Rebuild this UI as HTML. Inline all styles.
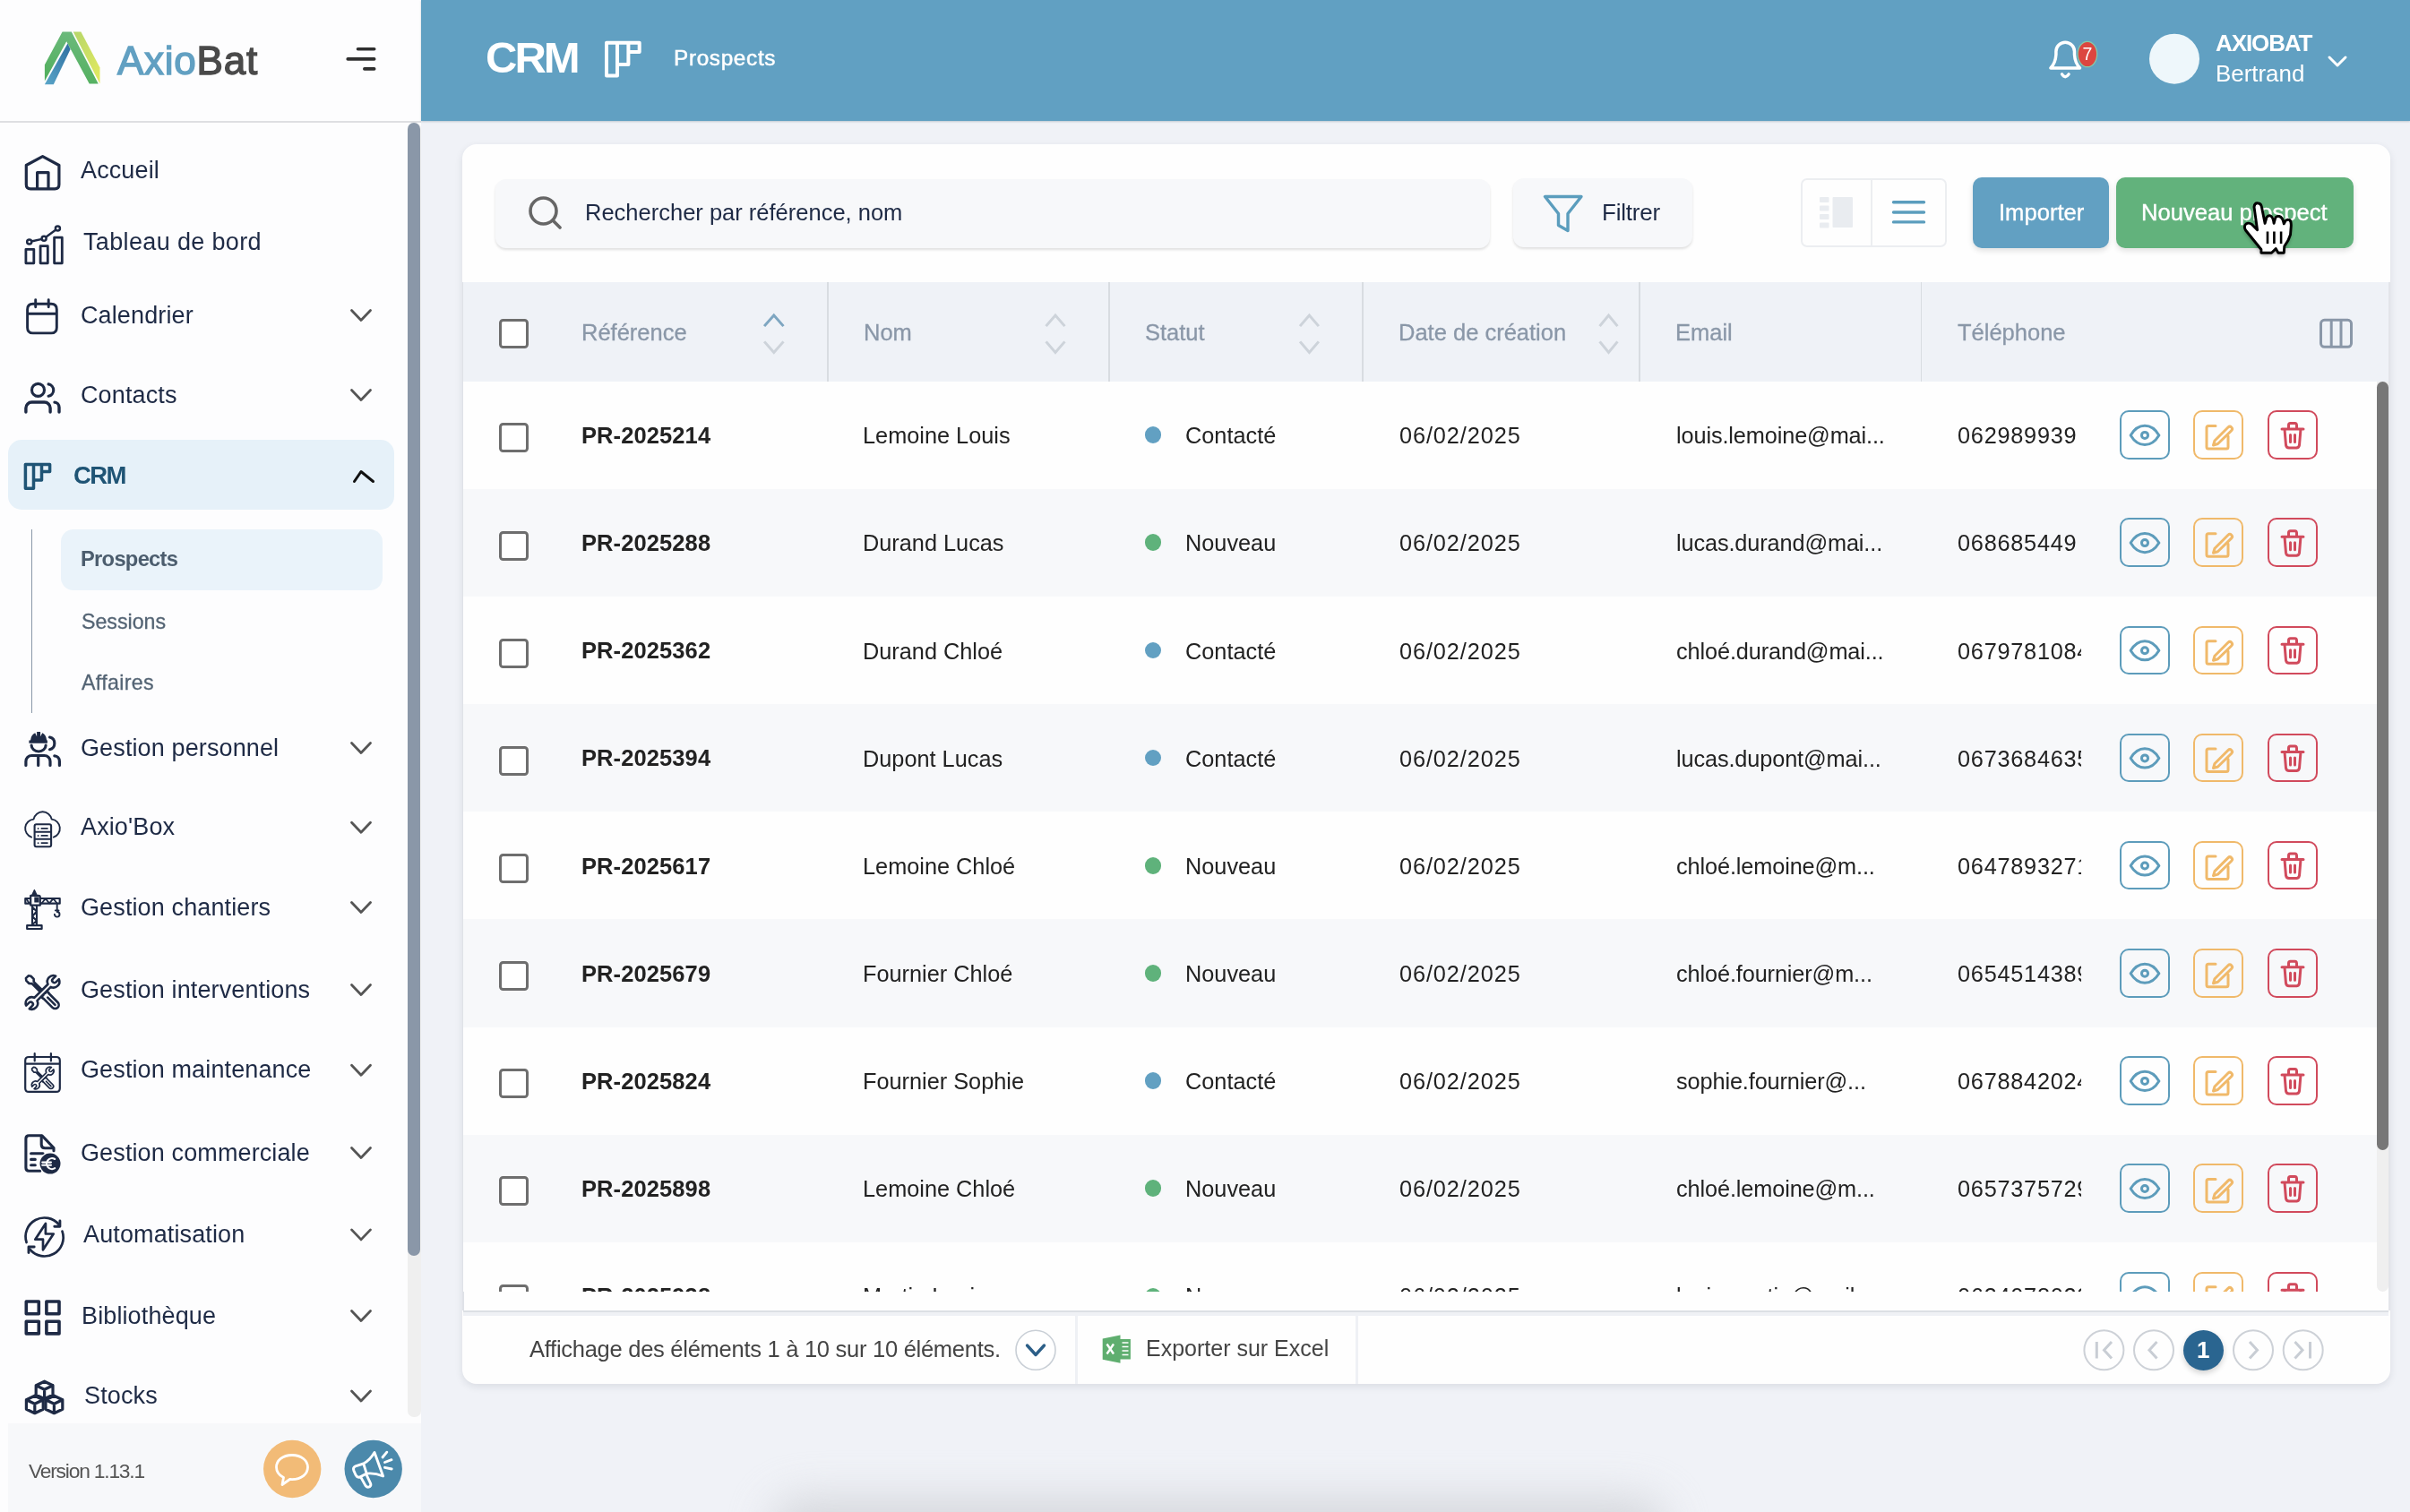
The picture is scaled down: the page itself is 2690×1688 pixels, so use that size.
<!DOCTYPE html>
<html><head><meta charset="utf-8"><title>AxioBat CRM - Prospects</title>
<style>
html,body{margin:0;padding:0;width:2690px;height:1688px;overflow:hidden;background:#f0f2f7}
body{position:relative;font-family:'Liberation Sans',sans-serif;}
.t{position:absolute;white-space:nowrap;font-family:'Liberation Sans',sans-serif;will-change:transform}
.r{position:absolute}
svg{overflow:visible}
</style></head><body>
<div class="r" style="left:0.0px;top:0.0px;width:2690.0px;height:1688.0px;background:#f0f2f7;"></div><div class="r" style="left:860px;top:1672px;width:1000px;height:70px;background:#cfd1d6;border-radius:35px;filter:blur(24px);opacity:0.8"></div><div class="r" style="left:0.0px;top:0.0px;width:470.0px;height:1688.0px;background:#fdfdfe;"></div><div class="r" style="left:0.0px;top:135.0px;width:470.0px;height:2.0px;background:#dedfe2;"></div><div class="r" style="left:470.0px;top:0.0px;width:2220.0px;height:135.0px;background:#61a0c2;box-shadow:0 1px 2px rgba(40,70,90,0.25);"></div><div class="t" style="left:541.5px;top:40.2px;font-size:49px;line-height:49px;color:#ffffff;font-weight:bold;letter-spacing:-3px;">CRM</div><div class="t" style="left:752.4px;top:53.1px;font-size:24.3px;line-height:24.3px;color:#ffffff;font-weight:normal;-webkit-text-stroke:0.5px #fff;letter-spacing:0.68px;">Prospects</div><div class="t" style="left:2473.0px;top:35.0px;font-size:26px;line-height:26px;color:#ffffff;font-weight:bold;letter-spacing:-1.1px;">AXIOBAT</div><div class="t" style="left:2473.0px;top:70.3px;font-size:25.9px;line-height:25.9px;color:#ffffff;font-weight:normal;">Bertrand</div><div class="t" style="left:131.2px;top:45.8px;font-size:44px;line-height:44px;color:#4a4a4a;font-weight:normal;letter-spacing:0.75px;"><span style="color:#62a0c2;-webkit-text-stroke:1.4px #62a0c2">Axio</span><span style="color:#4a4a4a;-webkit-text-stroke:1.4px #4a4a4a">Bat</span></div><div class="r" style="left:455.0px;top:137.0px;width:15.0px;height:1445.0px;background:#efefef;border-radius:7px;"></div><div class="r" style="left:455.0px;top:137.0px;width:14.0px;height:1265.0px;background:#8a97a8;border-radius:7px;"></div><div class="t" style="left:90.2px;top:177.0px;font-size:27px;line-height:27px;color:#1e2a45;font-weight:normal;letter-spacing:0.12px;">Accueil</div><div class="t" style="left:93.4px;top:257.0px;font-size:27px;line-height:27px;color:#1e2a45;font-weight:normal;letter-spacing:0.35px;">Tableau de bord</div><div class="t" style="left:90.2px;top:338.5px;font-size:27px;line-height:27px;color:#1e2a45;font-weight:normal;letter-spacing:0.12px;">Calendrier</div><div class="t" style="left:90.2px;top:427.5px;font-size:27px;line-height:27px;color:#1e2a45;font-weight:normal;letter-spacing:0.12px;">Contacts</div><div class="t" style="left:90.2px;top:821.5px;font-size:27px;line-height:27px;color:#1e2a45;font-weight:normal;letter-spacing:0.12px;">Gestion personnel</div><div class="t" style="left:90.2px;top:910.3px;font-size:27px;line-height:27px;color:#1e2a45;font-weight:normal;letter-spacing:0.12px;">Axio'Box</div><div class="t" style="left:90.2px;top:999.5px;font-size:27px;line-height:27px;color:#1e2a45;font-weight:normal;letter-spacing:0.12px;">Gestion chantiers</div><div class="t" style="left:90.2px;top:1091.5px;font-size:27px;line-height:27px;color:#1e2a45;font-weight:normal;letter-spacing:0.12px;">Gestion interventions</div><div class="t" style="left:90.2px;top:1181.2px;font-size:27px;line-height:27px;color:#1e2a45;font-weight:normal;letter-spacing:0.12px;">Gestion maintenance</div><div class="t" style="left:90.2px;top:1273.5px;font-size:27px;line-height:27px;color:#1e2a45;font-weight:normal;letter-spacing:0.12px;">Gestion commerciale</div><div class="t" style="left:93.4px;top:1364.9px;font-size:27px;line-height:27px;color:#1e2a45;font-weight:normal;letter-spacing:0.12px;">Automatisation</div><div class="t" style="left:90.5px;top:1455.5px;font-size:27px;line-height:27px;color:#1e2a45;font-weight:normal;letter-spacing:0.12px;">Bibliothèque</div><div class="t" style="left:93.8px;top:1545.0px;font-size:27px;line-height:27px;color:#1e2a45;font-weight:normal;letter-spacing:0.12px;">Stocks</div><div class="r" style="left:9.0px;top:491.0px;width:431.0px;height:78.0px;background:#e6f1f9;border-radius:15px;"></div><div class="t" style="left:82.0px;top:516.5px;font-size:27.5px;line-height:27.5px;color:#1f5475;font-weight:bold;letter-spacing:-1.6px;">CRM</div><div class="r" style="left:34.7px;top:591.0px;width:1.6px;height:205.0px;background:#8a98a8;"></div><div class="r" style="left:68.0px;top:591.0px;width:359.0px;height:68.4px;background:#eaf3fa;border-radius:14px;"></div><div class="t" style="left:89.6px;top:613.4px;font-size:23.7px;line-height:23.7px;color:#4c5d6e;font-weight:bold;letter-spacing:-0.7px;">Prospects</div><div class="t" style="left:90.6px;top:682.6px;font-size:23.2px;line-height:23.2px;color:#546474;font-weight:normal;-webkit-text-stroke:0.3px #546474;">Sessions</div><div class="t" style="left:90.9px;top:750.9px;font-size:23.2px;line-height:23.2px;color:#546474;font-weight:normal;-webkit-text-stroke:0.3px #546474;letter-spacing:0.35px;">Affaires</div><div class="r" style="left:9.0px;top:1589.0px;width:461.0px;height:99.0px;background:#f7f8fa;"></div><div class="t" style="left:32.2px;top:1631.4px;font-size:22.8px;line-height:22.8px;color:#555555;font-weight:normal;letter-spacing:-1.2px;">Version 1.13.1</div><div class="r" style="left:516px;top:161px;width:2152px;height:1384px;background:#fefefe;border-radius:16px;box-shadow:0 3px 8px rgba(30,40,60,0.10)"></div><div class="r" style="left:553px;top:200px;width:1110px;height:76.5px;background:#f7f8fa;border-radius:12px;box-shadow:0 2px 3px rgba(0,0,0,0.12)"></div><div class="t" style="left:653.0px;top:225.2px;font-size:25.5px;line-height:25.5px;color:#1e2a45;font-weight:normal;">Rechercher par référence, nom</div><div class="r" style="left:1689px;top:199px;width:200px;height:77.4px;background:#f7f8fa;border-radius:12px;box-shadow:0 2px 3px rgba(0,0,0,0.12)"></div><div class="t" style="left:1788.2px;top:224.4px;font-size:26px;line-height:26px;color:#1e2a45;font-weight:normal;letter-spacing:-0.2px;">Filtrer</div><div class="r" style="left:2009.5px;top:198.6px;width:163px;height:77px;border:2px solid #eceef1;border-radius:7px;box-sizing:border-box"></div><div class="r" style="left:2087.8px;top:199.0px;width:1.8px;height:76.0px;background:#eceef1;"></div><div class="r" style="left:2202.4px;top:198.3px;width:151.6px;height:79.2px;background:#62a0c2;border-radius:10px;box-shadow:0 3px 6px rgba(0,0,0,0.12)"></div><div class="t" style="left:2230.5px;top:224.8px;font-size:25.6px;line-height:25.6px;color:#ffffff;font-weight:normal;-webkit-text-stroke:0.35px #fff;">Importer</div><div class="r" style="left:2361.8px;top:198.3px;width:264.9px;height:79.2px;background:#62b27c;border-radius:10px;box-shadow:0 3px 6px rgba(0,0,0,0.12)"></div><div class="t" style="left:2390.0px;top:224.8px;font-size:25.6px;line-height:25.6px;color:#ffffff;font-weight:normal;-webkit-text-stroke:0.35px #fff;">Nouveau prospect</div><div class="r" style="left:515.5px;top:314.6px;width:2.0px;height:1148.3px;background:#dfe2e7;"></div><div class="r" style="left:2666.0px;top:314.6px;width:2.0px;height:1148.3px;background:#e3e5ea;"></div><div class="r" style="left:517.0px;top:314.6px;width:2149.0px;height:111.0px;background:#eff2f7;"></div><div class="r" style="left:557.4px;top:356.3px;width:33px;height:33px;border:3.1px solid #6e6e6e;border-radius:4.5px;box-sizing:border-box;background:#fff"></div><div class="t" style="left:649.3px;top:358.6px;font-size:25.5px;line-height:25.5px;color:#8a97a8;font-weight:normal;-webkit-text-stroke:0.3px #8a97a8;">Référence</div><div class="t" style="left:963.9px;top:358.6px;font-size:25.5px;line-height:25.5px;color:#8a97a8;font-weight:normal;-webkit-text-stroke:0.3px #8a97a8;">Nom</div><div class="t" style="left:1278.3px;top:358.6px;font-size:25.5px;line-height:25.5px;color:#8a97a8;font-weight:normal;-webkit-text-stroke:0.3px #8a97a8;">Statut</div><div class="t" style="left:1560.7px;top:358.6px;font-size:25.5px;line-height:25.5px;color:#8a97a8;font-weight:normal;-webkit-text-stroke:0.3px #8a97a8;">Date de création</div><div class="t" style="left:1870.4px;top:358.6px;font-size:25.5px;line-height:25.5px;color:#8a97a8;font-weight:normal;-webkit-text-stroke:0.3px #8a97a8;">Email</div><div class="t" style="left:2185.4px;top:358.6px;font-size:25.5px;line-height:25.5px;color:#8a97a8;font-weight:normal;-webkit-text-stroke:0.3px #8a97a8;">Téléphone</div><div class="r" style="left:923.0px;top:314.6px;width:1.6px;height:111.0px;background:#d8dce1;"></div><div class="r" style="left:1237.4px;top:314.6px;width:1.6px;height:111.0px;background:#d8dce1;"></div><div class="r" style="left:1520.4px;top:314.6px;width:1.6px;height:111.0px;background:#d8dce1;"></div><div class="r" style="left:1829.1px;top:314.6px;width:1.6px;height:111.0px;background:#d8dce1;"></div><div class="r" style="left:2143.6px;top:314.6px;width:1.6px;height:111.0px;background:#d8dce1;"></div><div class="r" style="left:517px;top:425.6px;width:2136px;height:1016.8px;overflow:hidden"><div class="r" style="left:0px;top:0.0px;width:2136px;height:120.2px;background:#fefefe"></div><div class="r" style="left:40px;top:46.8px;width:33px;height:33px;border:3.1px solid #6e6e6e;border-radius:4.5px;box-sizing:border-box;background:#fff"></div><div class="t" style="left:131.8px;top:48.5px;font-size:25.5px;line-height:25.5px;color:#222;font-weight:bold;letter-spacing:0.1px;">PR-2025214</div><div class="t" style="left:446.0px;top:48.6px;font-size:25.3px;line-height:25.3px;color:#222;font-weight:normal;">Lemoine Louis</div><div class="r" style="left:760.7px;top:50.8px;width:18.7px;height:18.7px;border-radius:50%;background:#62a0c2"></div><div class="t" style="left:806.4px;top:48.6px;font-size:25.3px;line-height:25.3px;color:#222;font-weight:normal;">Contacté</div><div class="t" style="left:1044.6px;top:48.6px;font-size:25.3px;line-height:25.3px;color:#222;font-weight:normal;letter-spacing:0.9px;">06/02/2025</div><div class="t" style="left:1353.6px;top:48.6px;font-size:25.3px;line-height:25.3px;color:#222;font-weight:normal;letter-spacing:-0.12px;">louis.lemoine@mai...</div><div class="t" style="left:1667.6px;top:48.6px;width:137.6px;overflow:hidden;font-size:25.3px;line-height:25.3px;color:#222;letter-spacing:0.75px">062989939</div><div class="r" style="left:1848.6px;top:32.7px;width:56px;height:54.5px;border:2.2px solid #5d9cbb;border-radius:10px;box-sizing:border-box"></div><div class="r" style="left:1931.0px;top:32.7px;width:56px;height:54.5px;border:2.2px solid #f0b96a;border-radius:10px;box-sizing:border-box"></div><div class="r" style="left:2014.0px;top:32.7px;width:56px;height:54.5px;border:2.2px solid #d14a5c;border-radius:10px;box-sizing:border-box"></div><div class="r" style="left:0px;top:120.2px;width:2136px;height:120.2px;background:#f7f8fa"></div><div class="r" style="left:40px;top:167.0px;width:33px;height:33px;border:3.1px solid #6e6e6e;border-radius:4.5px;box-sizing:border-box;background:#fff"></div><div class="t" style="left:131.8px;top:168.6px;font-size:25.5px;line-height:25.5px;color:#222;font-weight:bold;letter-spacing:0.1px;">PR-2025288</div><div class="t" style="left:446.0px;top:168.8px;font-size:25.3px;line-height:25.3px;color:#222;font-weight:normal;">Durand Lucas</div><div class="r" style="left:760.7px;top:170.9px;width:18.7px;height:18.7px;border-radius:50%;background:#5fb27b"></div><div class="t" style="left:806.4px;top:168.8px;font-size:25.3px;line-height:25.3px;color:#222;font-weight:normal;">Nouveau</div><div class="t" style="left:1044.6px;top:168.8px;font-size:25.3px;line-height:25.3px;color:#222;font-weight:normal;letter-spacing:0.9px;">06/02/2025</div><div class="t" style="left:1353.6px;top:168.8px;font-size:25.3px;line-height:25.3px;color:#222;font-weight:normal;letter-spacing:-0.12px;">lucas.durand@mai...</div><div class="t" style="left:1667.6px;top:168.8px;width:137.6px;overflow:hidden;font-size:25.3px;line-height:25.3px;color:#222;letter-spacing:0.75px">068685449</div><div class="r" style="left:1848.6px;top:152.9px;width:56px;height:54.5px;border:2.2px solid #5d9cbb;border-radius:10px;box-sizing:border-box"></div><div class="r" style="left:1931.0px;top:152.9px;width:56px;height:54.5px;border:2.2px solid #f0b96a;border-radius:10px;box-sizing:border-box"></div><div class="r" style="left:2014.0px;top:152.9px;width:56px;height:54.5px;border:2.2px solid #d14a5c;border-radius:10px;box-sizing:border-box"></div><div class="r" style="left:0px;top:240.3px;width:2136px;height:120.2px;background:#fefefe"></div><div class="r" style="left:40px;top:287.1px;width:33px;height:33px;border:3.1px solid #6e6e6e;border-radius:4.5px;box-sizing:border-box;background:#fff"></div><div class="t" style="left:131.8px;top:288.8px;font-size:25.5px;line-height:25.5px;color:#222;font-weight:bold;letter-spacing:0.1px;">PR-2025362</div><div class="t" style="left:446.0px;top:289.0px;font-size:25.3px;line-height:25.3px;color:#222;font-weight:normal;">Durand Chloé</div><div class="r" style="left:760.7px;top:291.1px;width:18.7px;height:18.7px;border-radius:50%;background:#62a0c2"></div><div class="t" style="left:806.4px;top:289.0px;font-size:25.3px;line-height:25.3px;color:#222;font-weight:normal;">Contacté</div><div class="t" style="left:1044.6px;top:289.0px;font-size:25.3px;line-height:25.3px;color:#222;font-weight:normal;letter-spacing:0.9px;">06/02/2025</div><div class="t" style="left:1353.6px;top:289.0px;font-size:25.3px;line-height:25.3px;color:#222;font-weight:normal;letter-spacing:-0.12px;">chloé.durand@mai...</div><div class="t" style="left:1667.6px;top:289.0px;width:137.6px;overflow:hidden;font-size:25.3px;line-height:25.3px;color:#222;letter-spacing:0.75px">0679781084</div><div class="r" style="left:1848.6px;top:273.0px;width:56px;height:54.5px;border:2.2px solid #5d9cbb;border-radius:10px;box-sizing:border-box"></div><div class="r" style="left:1931.0px;top:273.0px;width:56px;height:54.5px;border:2.2px solid #f0b96a;border-radius:10px;box-sizing:border-box"></div><div class="r" style="left:2014.0px;top:273.0px;width:56px;height:54.5px;border:2.2px solid #d14a5c;border-radius:10px;box-sizing:border-box"></div><div class="r" style="left:0px;top:360.5px;width:2136px;height:120.2px;background:#f7f8fa"></div><div class="r" style="left:40px;top:407.3px;width:33px;height:33px;border:3.1px solid #6e6e6e;border-radius:4.5px;box-sizing:border-box;background:#fff"></div><div class="t" style="left:131.8px;top:408.9px;font-size:25.5px;line-height:25.5px;color:#222;font-weight:bold;letter-spacing:0.1px;">PR-2025394</div><div class="t" style="left:446.0px;top:409.1px;font-size:25.3px;line-height:25.3px;color:#222;font-weight:normal;">Dupont Lucas</div><div class="r" style="left:760.7px;top:411.2px;width:18.7px;height:18.7px;border-radius:50%;background:#62a0c2"></div><div class="t" style="left:806.4px;top:409.1px;font-size:25.3px;line-height:25.3px;color:#222;font-weight:normal;">Contacté</div><div class="t" style="left:1044.6px;top:409.1px;font-size:25.3px;line-height:25.3px;color:#222;font-weight:normal;letter-spacing:0.9px;">06/02/2025</div><div class="t" style="left:1353.6px;top:409.1px;font-size:25.3px;line-height:25.3px;color:#222;font-weight:normal;letter-spacing:-0.12px;">lucas.dupont@mai...</div><div class="t" style="left:1667.6px;top:409.1px;width:137.6px;overflow:hidden;font-size:25.3px;line-height:25.3px;color:#222;letter-spacing:0.75px">0673684635</div><div class="r" style="left:1848.6px;top:393.2px;width:56px;height:54.5px;border:2.2px solid #5d9cbb;border-radius:10px;box-sizing:border-box"></div><div class="r" style="left:1931.0px;top:393.2px;width:56px;height:54.5px;border:2.2px solid #f0b96a;border-radius:10px;box-sizing:border-box"></div><div class="r" style="left:2014.0px;top:393.2px;width:56px;height:54.5px;border:2.2px solid #d14a5c;border-radius:10px;box-sizing:border-box"></div><div class="r" style="left:0px;top:480.6px;width:2136px;height:120.2px;background:#fefefe"></div><div class="r" style="left:40px;top:527.4px;width:33px;height:33px;border:3.1px solid #6e6e6e;border-radius:4.5px;box-sizing:border-box;background:#fff"></div><div class="t" style="left:131.8px;top:529.1px;font-size:25.5px;line-height:25.5px;color:#222;font-weight:bold;letter-spacing:0.1px;">PR-2025617</div><div class="t" style="left:446.0px;top:529.3px;font-size:25.3px;line-height:25.3px;color:#222;font-weight:normal;">Lemoine Chloé</div><div class="r" style="left:760.7px;top:531.4px;width:18.7px;height:18.7px;border-radius:50%;background:#5fb27b"></div><div class="t" style="left:806.4px;top:529.3px;font-size:25.3px;line-height:25.3px;color:#222;font-weight:normal;">Nouveau</div><div class="t" style="left:1044.6px;top:529.3px;font-size:25.3px;line-height:25.3px;color:#222;font-weight:normal;letter-spacing:0.9px;">06/02/2025</div><div class="t" style="left:1353.6px;top:529.3px;font-size:25.3px;line-height:25.3px;color:#222;font-weight:normal;letter-spacing:-0.12px;">chloé.lemoine@m...</div><div class="t" style="left:1667.6px;top:529.3px;width:137.6px;overflow:hidden;font-size:25.3px;line-height:25.3px;color:#222;letter-spacing:0.75px">0647893271</div><div class="r" style="left:1848.6px;top:513.3px;width:56px;height:54.5px;border:2.2px solid #5d9cbb;border-radius:10px;box-sizing:border-box"></div><div class="r" style="left:1931.0px;top:513.3px;width:56px;height:54.5px;border:2.2px solid #f0b96a;border-radius:10px;box-sizing:border-box"></div><div class="r" style="left:2014.0px;top:513.3px;width:56px;height:54.5px;border:2.2px solid #d14a5c;border-radius:10px;box-sizing:border-box"></div><div class="r" style="left:0px;top:600.8px;width:2136px;height:120.2px;background:#f7f8fa"></div><div class="r" style="left:40px;top:647.6px;width:33px;height:33px;border:3.1px solid #6e6e6e;border-radius:4.5px;box-sizing:border-box;background:#fff"></div><div class="t" style="left:131.8px;top:649.2px;font-size:25.5px;line-height:25.5px;color:#222;font-weight:bold;letter-spacing:0.1px;">PR-2025679</div><div class="t" style="left:446.0px;top:649.4px;font-size:25.3px;line-height:25.3px;color:#222;font-weight:normal;">Fournier Chloé</div><div class="r" style="left:760.7px;top:651.5px;width:18.7px;height:18.7px;border-radius:50%;background:#5fb27b"></div><div class="t" style="left:806.4px;top:649.4px;font-size:25.3px;line-height:25.3px;color:#222;font-weight:normal;">Nouveau</div><div class="t" style="left:1044.6px;top:649.4px;font-size:25.3px;line-height:25.3px;color:#222;font-weight:normal;letter-spacing:0.9px;">06/02/2025</div><div class="t" style="left:1353.6px;top:649.4px;font-size:25.3px;line-height:25.3px;color:#222;font-weight:normal;letter-spacing:-0.12px;">chloé.fournier@m...</div><div class="t" style="left:1667.6px;top:649.4px;width:137.6px;overflow:hidden;font-size:25.3px;line-height:25.3px;color:#222;letter-spacing:0.75px">0654514389</div><div class="r" style="left:1848.6px;top:633.5px;width:56px;height:54.5px;border:2.2px solid #5d9cbb;border-radius:10px;box-sizing:border-box"></div><div class="r" style="left:1931.0px;top:633.5px;width:56px;height:54.5px;border:2.2px solid #f0b96a;border-radius:10px;box-sizing:border-box"></div><div class="r" style="left:2014.0px;top:633.5px;width:56px;height:54.5px;border:2.2px solid #d14a5c;border-radius:10px;box-sizing:border-box"></div><div class="r" style="left:0px;top:721.0px;width:2136px;height:120.2px;background:#fefefe"></div><div class="r" style="left:40px;top:767.8px;width:33px;height:33px;border:3.1px solid #6e6e6e;border-radius:4.5px;box-sizing:border-box;background:#fff"></div><div class="t" style="left:131.8px;top:769.4px;font-size:25.5px;line-height:25.5px;color:#222;font-weight:bold;letter-spacing:0.1px;">PR-2025824</div><div class="t" style="left:446.0px;top:769.6px;font-size:25.3px;line-height:25.3px;color:#222;font-weight:normal;">Fournier Sophie</div><div class="r" style="left:760.7px;top:771.7px;width:18.7px;height:18.7px;border-radius:50%;background:#62a0c2"></div><div class="t" style="left:806.4px;top:769.6px;font-size:25.3px;line-height:25.3px;color:#222;font-weight:normal;">Contacté</div><div class="t" style="left:1044.6px;top:769.6px;font-size:25.3px;line-height:25.3px;color:#222;font-weight:normal;letter-spacing:0.9px;">06/02/2025</div><div class="t" style="left:1353.6px;top:769.6px;font-size:25.3px;line-height:25.3px;color:#222;font-weight:normal;letter-spacing:-0.12px;">sophie.fournier@...</div><div class="t" style="left:1667.6px;top:769.6px;width:137.6px;overflow:hidden;font-size:25.3px;line-height:25.3px;color:#222;letter-spacing:0.75px">0678842024</div><div class="r" style="left:1848.6px;top:753.7px;width:56px;height:54.5px;border:2.2px solid #5d9cbb;border-radius:10px;box-sizing:border-box"></div><div class="r" style="left:1931.0px;top:753.7px;width:56px;height:54.5px;border:2.2px solid #f0b96a;border-radius:10px;box-sizing:border-box"></div><div class="r" style="left:2014.0px;top:753.7px;width:56px;height:54.5px;border:2.2px solid #d14a5c;border-radius:10px;box-sizing:border-box"></div><div class="r" style="left:0px;top:841.1px;width:2136px;height:120.2px;background:#f7f8fa"></div><div class="r" style="left:40px;top:887.9px;width:33px;height:33px;border:3.1px solid #6e6e6e;border-radius:4.5px;box-sizing:border-box;background:#fff"></div><div class="t" style="left:131.8px;top:889.6px;font-size:25.5px;line-height:25.5px;color:#222;font-weight:bold;letter-spacing:0.1px;">PR-2025898</div><div class="t" style="left:446.0px;top:889.8px;font-size:25.3px;line-height:25.3px;color:#222;font-weight:normal;">Lemoine Chloé</div><div class="r" style="left:760.7px;top:891.9px;width:18.7px;height:18.7px;border-radius:50%;background:#5fb27b"></div><div class="t" style="left:806.4px;top:889.8px;font-size:25.3px;line-height:25.3px;color:#222;font-weight:normal;">Nouveau</div><div class="t" style="left:1044.6px;top:889.8px;font-size:25.3px;line-height:25.3px;color:#222;font-weight:normal;letter-spacing:0.9px;">06/02/2025</div><div class="t" style="left:1353.6px;top:889.8px;font-size:25.3px;line-height:25.3px;color:#222;font-weight:normal;letter-spacing:-0.12px;">chloé.lemoine@m...</div><div class="t" style="left:1667.6px;top:889.8px;width:137.6px;overflow:hidden;font-size:25.3px;line-height:25.3px;color:#222;letter-spacing:0.75px">0657375729</div><div class="r" style="left:1848.6px;top:873.8px;width:56px;height:54.5px;border:2.2px solid #5d9cbb;border-radius:10px;box-sizing:border-box"></div><div class="r" style="left:1931.0px;top:873.8px;width:56px;height:54.5px;border:2.2px solid #f0b96a;border-radius:10px;box-sizing:border-box"></div><div class="r" style="left:2014.0px;top:873.8px;width:56px;height:54.5px;border:2.2px solid #d14a5c;border-radius:10px;box-sizing:border-box"></div><div class="r" style="left:0px;top:961.3px;width:2136px;height:120.2px;background:#fefefe"></div><div class="r" style="left:40px;top:1008.1px;width:33px;height:33px;border:3.1px solid #6e6e6e;border-radius:4.5px;box-sizing:border-box;background:#fff"></div><div class="t" style="left:131.8px;top:1009.7px;font-size:25.5px;line-height:25.5px;color:#222;font-weight:bold;letter-spacing:0.1px;">PR-2025938</div><div class="t" style="left:446.0px;top:1009.9px;font-size:25.3px;line-height:25.3px;color:#222;font-weight:normal;">Martin Louis</div><div class="r" style="left:760.7px;top:1012.0px;width:18.7px;height:18.7px;border-radius:50%;background:#5fb27b"></div><div class="t" style="left:806.4px;top:1009.9px;font-size:25.3px;line-height:25.3px;color:#222;font-weight:normal;">Nouveau</div><div class="t" style="left:1044.6px;top:1009.9px;font-size:25.3px;line-height:25.3px;color:#222;font-weight:normal;letter-spacing:0.9px;">06/02/2025</div><div class="t" style="left:1353.6px;top:1009.9px;font-size:25.3px;line-height:25.3px;color:#222;font-weight:normal;letter-spacing:-0.12px;">louis.martin@mail...</div><div class="t" style="left:1667.6px;top:1009.9px;width:137.6px;overflow:hidden;font-size:25.3px;line-height:25.3px;color:#222;letter-spacing:0.75px">0634078023</div><div class="r" style="left:1848.6px;top:994.0px;width:56px;height:54.5px;border:2.2px solid #5d9cbb;border-radius:10px;box-sizing:border-box"></div><div class="r" style="left:1931.0px;top:994.0px;width:56px;height:54.5px;border:2.2px solid #f0b96a;border-radius:10px;box-sizing:border-box"></div><div class="r" style="left:2014.0px;top:994.0px;width:56px;height:54.5px;border:2.2px solid #d14a5c;border-radius:10px;box-sizing:border-box"></div><svg class="r" style="left:0;top:0" width="2136" height="1100" viewBox="0 0 2136 1100"><g transform="translate(0,0.0)" fill="none" stroke-linecap="round" stroke-linejoin="round"><g transform="translate(1877,59.9) scale(1.76) translate(-12,-12)"><path d="M10 12a2 2 0 1 0 4 0a2 2 0 0 0 -4 0" stroke="#5d9cbb" stroke-width="1.7"/><path d="M21 12c-2.4 4 -5.4 6 -9 6c-3.6 0 -6.6 -2 -9 -6c2.4 -4 5.4 -6 9 -6c3.6 0 6.6 2 9 6" stroke="#5d9cbb" stroke-width="1.7"/></g><path d="M1956,49.5 H1948 Q1946,49.5 1946,51.5 V73 Q1946,75 1948,75 H1968 Q1970,75 1970,73 V61" stroke="#f0b96a" stroke-width="3"/><path d="M1955,66 L1970,51 a2.6,2.6 0 0 1 3.7,3.7 L1958.5,69.5 L1953.5,71 Z" stroke="#f0b96a" stroke-width="3"/><path d="M2030,53 H2054 M2033,53 L2034.5,71 Q2035,74 2038,74 H2046 Q2049,74 2049.5,71 L2051,53 M2037.5,53 V48.5 Q2037.5,46.5 2039.5,46.5 H2044.5 Q2046.5,46.5 2046.5,48.5 V53 M2039.5,59.5 V67.5 M2044.5,59.5 V67.5" stroke="#d14a5c" stroke-width="3"/></g><g transform="translate(0,120.2)" fill="none" stroke-linecap="round" stroke-linejoin="round"><g transform="translate(1877,59.9) scale(1.76) translate(-12,-12)"><path d="M10 12a2 2 0 1 0 4 0a2 2 0 0 0 -4 0" stroke="#5d9cbb" stroke-width="1.7"/><path d="M21 12c-2.4 4 -5.4 6 -9 6c-3.6 0 -6.6 -2 -9 -6c2.4 -4 5.4 -6 9 -6c3.6 0 6.6 2 9 6" stroke="#5d9cbb" stroke-width="1.7"/></g><path d="M1956,49.5 H1948 Q1946,49.5 1946,51.5 V73 Q1946,75 1948,75 H1968 Q1970,75 1970,73 V61" stroke="#f0b96a" stroke-width="3"/><path d="M1955,66 L1970,51 a2.6,2.6 0 0 1 3.7,3.7 L1958.5,69.5 L1953.5,71 Z" stroke="#f0b96a" stroke-width="3"/><path d="M2030,53 H2054 M2033,53 L2034.5,71 Q2035,74 2038,74 H2046 Q2049,74 2049.5,71 L2051,53 M2037.5,53 V48.5 Q2037.5,46.5 2039.5,46.5 H2044.5 Q2046.5,46.5 2046.5,48.5 V53 M2039.5,59.5 V67.5 M2044.5,59.5 V67.5" stroke="#d14a5c" stroke-width="3"/></g><g transform="translate(0,240.3)" fill="none" stroke-linecap="round" stroke-linejoin="round"><g transform="translate(1877,59.9) scale(1.76) translate(-12,-12)"><path d="M10 12a2 2 0 1 0 4 0a2 2 0 0 0 -4 0" stroke="#5d9cbb" stroke-width="1.7"/><path d="M21 12c-2.4 4 -5.4 6 -9 6c-3.6 0 -6.6 -2 -9 -6c2.4 -4 5.4 -6 9 -6c3.6 0 6.6 2 9 6" stroke="#5d9cbb" stroke-width="1.7"/></g><path d="M1956,49.5 H1948 Q1946,49.5 1946,51.5 V73 Q1946,75 1948,75 H1968 Q1970,75 1970,73 V61" stroke="#f0b96a" stroke-width="3"/><path d="M1955,66 L1970,51 a2.6,2.6 0 0 1 3.7,3.7 L1958.5,69.5 L1953.5,71 Z" stroke="#f0b96a" stroke-width="3"/><path d="M2030,53 H2054 M2033,53 L2034.5,71 Q2035,74 2038,74 H2046 Q2049,74 2049.5,71 L2051,53 M2037.5,53 V48.5 Q2037.5,46.5 2039.5,46.5 H2044.5 Q2046.5,46.5 2046.5,48.5 V53 M2039.5,59.5 V67.5 M2044.5,59.5 V67.5" stroke="#d14a5c" stroke-width="3"/></g><g transform="translate(0,360.5)" fill="none" stroke-linecap="round" stroke-linejoin="round"><g transform="translate(1877,59.9) scale(1.76) translate(-12,-12)"><path d="M10 12a2 2 0 1 0 4 0a2 2 0 0 0 -4 0" stroke="#5d9cbb" stroke-width="1.7"/><path d="M21 12c-2.4 4 -5.4 6 -9 6c-3.6 0 -6.6 -2 -9 -6c2.4 -4 5.4 -6 9 -6c3.6 0 6.6 2 9 6" stroke="#5d9cbb" stroke-width="1.7"/></g><path d="M1956,49.5 H1948 Q1946,49.5 1946,51.5 V73 Q1946,75 1948,75 H1968 Q1970,75 1970,73 V61" stroke="#f0b96a" stroke-width="3"/><path d="M1955,66 L1970,51 a2.6,2.6 0 0 1 3.7,3.7 L1958.5,69.5 L1953.5,71 Z" stroke="#f0b96a" stroke-width="3"/><path d="M2030,53 H2054 M2033,53 L2034.5,71 Q2035,74 2038,74 H2046 Q2049,74 2049.5,71 L2051,53 M2037.5,53 V48.5 Q2037.5,46.5 2039.5,46.5 H2044.5 Q2046.5,46.5 2046.5,48.5 V53 M2039.5,59.5 V67.5 M2044.5,59.5 V67.5" stroke="#d14a5c" stroke-width="3"/></g><g transform="translate(0,480.6)" fill="none" stroke-linecap="round" stroke-linejoin="round"><g transform="translate(1877,59.9) scale(1.76) translate(-12,-12)"><path d="M10 12a2 2 0 1 0 4 0a2 2 0 0 0 -4 0" stroke="#5d9cbb" stroke-width="1.7"/><path d="M21 12c-2.4 4 -5.4 6 -9 6c-3.6 0 -6.6 -2 -9 -6c2.4 -4 5.4 -6 9 -6c3.6 0 6.6 2 9 6" stroke="#5d9cbb" stroke-width="1.7"/></g><path d="M1956,49.5 H1948 Q1946,49.5 1946,51.5 V73 Q1946,75 1948,75 H1968 Q1970,75 1970,73 V61" stroke="#f0b96a" stroke-width="3"/><path d="M1955,66 L1970,51 a2.6,2.6 0 0 1 3.7,3.7 L1958.5,69.5 L1953.5,71 Z" stroke="#f0b96a" stroke-width="3"/><path d="M2030,53 H2054 M2033,53 L2034.5,71 Q2035,74 2038,74 H2046 Q2049,74 2049.5,71 L2051,53 M2037.5,53 V48.5 Q2037.5,46.5 2039.5,46.5 H2044.5 Q2046.5,46.5 2046.5,48.5 V53 M2039.5,59.5 V67.5 M2044.5,59.5 V67.5" stroke="#d14a5c" stroke-width="3"/></g><g transform="translate(0,600.8)" fill="none" stroke-linecap="round" stroke-linejoin="round"><g transform="translate(1877,59.9) scale(1.76) translate(-12,-12)"><path d="M10 12a2 2 0 1 0 4 0a2 2 0 0 0 -4 0" stroke="#5d9cbb" stroke-width="1.7"/><path d="M21 12c-2.4 4 -5.4 6 -9 6c-3.6 0 -6.6 -2 -9 -6c2.4 -4 5.4 -6 9 -6c3.6 0 6.6 2 9 6" stroke="#5d9cbb" stroke-width="1.7"/></g><path d="M1956,49.5 H1948 Q1946,49.5 1946,51.5 V73 Q1946,75 1948,75 H1968 Q1970,75 1970,73 V61" stroke="#f0b96a" stroke-width="3"/><path d="M1955,66 L1970,51 a2.6,2.6 0 0 1 3.7,3.7 L1958.5,69.5 L1953.5,71 Z" stroke="#f0b96a" stroke-width="3"/><path d="M2030,53 H2054 M2033,53 L2034.5,71 Q2035,74 2038,74 H2046 Q2049,74 2049.5,71 L2051,53 M2037.5,53 V48.5 Q2037.5,46.5 2039.5,46.5 H2044.5 Q2046.5,46.5 2046.5,48.5 V53 M2039.5,59.5 V67.5 M2044.5,59.5 V67.5" stroke="#d14a5c" stroke-width="3"/></g><g transform="translate(0,721.0)" fill="none" stroke-linecap="round" stroke-linejoin="round"><g transform="translate(1877,59.9) scale(1.76) translate(-12,-12)"><path d="M10 12a2 2 0 1 0 4 0a2 2 0 0 0 -4 0" stroke="#5d9cbb" stroke-width="1.7"/><path d="M21 12c-2.4 4 -5.4 6 -9 6c-3.6 0 -6.6 -2 -9 -6c2.4 -4 5.4 -6 9 -6c3.6 0 6.6 2 9 6" stroke="#5d9cbb" stroke-width="1.7"/></g><path d="M1956,49.5 H1948 Q1946,49.5 1946,51.5 V73 Q1946,75 1948,75 H1968 Q1970,75 1970,73 V61" stroke="#f0b96a" stroke-width="3"/><path d="M1955,66 L1970,51 a2.6,2.6 0 0 1 3.7,3.7 L1958.5,69.5 L1953.5,71 Z" stroke="#f0b96a" stroke-width="3"/><path d="M2030,53 H2054 M2033,53 L2034.5,71 Q2035,74 2038,74 H2046 Q2049,74 2049.5,71 L2051,53 M2037.5,53 V48.5 Q2037.5,46.5 2039.5,46.5 H2044.5 Q2046.5,46.5 2046.5,48.5 V53 M2039.5,59.5 V67.5 M2044.5,59.5 V67.5" stroke="#d14a5c" stroke-width="3"/></g><g transform="translate(0,841.1)" fill="none" stroke-linecap="round" stroke-linejoin="round"><g transform="translate(1877,59.9) scale(1.76) translate(-12,-12)"><path d="M10 12a2 2 0 1 0 4 0a2 2 0 0 0 -4 0" stroke="#5d9cbb" stroke-width="1.7"/><path d="M21 12c-2.4 4 -5.4 6 -9 6c-3.6 0 -6.6 -2 -9 -6c2.4 -4 5.4 -6 9 -6c3.6 0 6.6 2 9 6" stroke="#5d9cbb" stroke-width="1.7"/></g><path d="M1956,49.5 H1948 Q1946,49.5 1946,51.5 V73 Q1946,75 1948,75 H1968 Q1970,75 1970,73 V61" stroke="#f0b96a" stroke-width="3"/><path d="M1955,66 L1970,51 a2.6,2.6 0 0 1 3.7,3.7 L1958.5,69.5 L1953.5,71 Z" stroke="#f0b96a" stroke-width="3"/><path d="M2030,53 H2054 M2033,53 L2034.5,71 Q2035,74 2038,74 H2046 Q2049,74 2049.5,71 L2051,53 M2037.5,53 V48.5 Q2037.5,46.5 2039.5,46.5 H2044.5 Q2046.5,46.5 2046.5,48.5 V53 M2039.5,59.5 V67.5 M2044.5,59.5 V67.5" stroke="#d14a5c" stroke-width="3"/></g><g transform="translate(0,961.3)" fill="none" stroke-linecap="round" stroke-linejoin="round"><g transform="translate(1877,59.9) scale(1.76) translate(-12,-12)"><path d="M10 12a2 2 0 1 0 4 0a2 2 0 0 0 -4 0" stroke="#5d9cbb" stroke-width="1.7"/><path d="M21 12c-2.4 4 -5.4 6 -9 6c-3.6 0 -6.6 -2 -9 -6c2.4 -4 5.4 -6 9 -6c3.6 0 6.6 2 9 6" stroke="#5d9cbb" stroke-width="1.7"/></g><path d="M1956,49.5 H1948 Q1946,49.5 1946,51.5 V73 Q1946,75 1948,75 H1968 Q1970,75 1970,73 V61" stroke="#f0b96a" stroke-width="3"/><path d="M1955,66 L1970,51 a2.6,2.6 0 0 1 3.7,3.7 L1958.5,69.5 L1953.5,71 Z" stroke="#f0b96a" stroke-width="3"/><path d="M2030,53 H2054 M2033,53 L2034.5,71 Q2035,74 2038,74 H2046 Q2049,74 2049.5,71 L2051,53 M2037.5,53 V48.5 Q2037.5,46.5 2039.5,46.5 H2044.5 Q2046.5,46.5 2046.5,48.5 V53 M2039.5,59.5 V67.5 M2044.5,59.5 V67.5" stroke="#d14a5c" stroke-width="3"/></g></svg></div><div class="r" style="left:2653.0px;top:425.6px;width:13.0px;height:1016.8px;background:#efefef;border-radius:0 0 6.5px 6.5px;"></div><div class="r" style="left:2653.0px;top:426.0px;width:13.0px;height:858.0px;background:#777777;border-radius:6.5px;"></div><div class="r" style="left:517.0px;top:1462.9px;width:2149.0px;height:2.1px;background:#dcdfe4;"></div><div class="r" style="left:517.0px;top:1465.0px;width:2149.0px;height:3.6px;background:#eff1f5;"></div><div class="t" style="left:590.9px;top:1494.0px;font-size:25.5px;line-height:25.5px;color:#444444;font-weight:normal;letter-spacing:-0.27px;">Affichage des éléments 1 à 10 sur 10 éléments.</div><div class="r" style="left:1199.8px;top:1468.6px;width:2.8px;height:76.4px;background:#eff1f5;"></div><div class="r" style="left:1512.8px;top:1468.6px;width:2.8px;height:76.4px;background:#eff1f5;"></div><div class="t" style="left:1278.5px;top:1492.8px;font-size:25px;line-height:25px;color:#444444;font-weight:normal;">Exporter sur Excel</div><div class="r" style="left:2436.9px;top:1484.5px;width:45.6px;height:45.6px;border-radius:50%;background:#2a6590;box-shadow:0 3px 6px rgba(0,0,0,0.18)"></div><div class="t" style="left:2452.2px;top:1494.3px;font-size:26px;line-height:26px;color:#ffffff;font-weight:bold;">1</div>
<svg class="r" style="left:0;top:0;pointer-events:none" width="2690" height="1688" viewBox="0 0 2690 1688"><path d="M677,47.7 H713.7 V58 H701.4 V72 H689 V84.4 H677 Z M689,47.7 V72 M701.4,47.7 V58" fill="none" stroke="#fff" stroke-width="4" stroke-linejoin="round"/><path d="M2288.9,76 H2321.5 Q2316,70 2315.5,61 V57.5 A10.3,10.3 0 0 0 2294.9,57.5 V61 Q2294.4,70 2288.9,76 Z" fill="none" stroke="#fff" stroke-width="3.5" stroke-linejoin="round"/><path d="M2301.5,82.9 Q2305.3,88.5 2309.1,82.9" fill="none" stroke="#fff" stroke-width="3.4" stroke-linecap="round"/><ellipse cx="2329.9" cy="60.5" rx="10.8" ry="14.2" fill="#dc4640" stroke="#86c9a9" stroke-width="1.3"/><text x="2324.6" y="67" font-family="Liberation Sans" font-size="19.5" fill="#fff">7</text><circle cx="2427" cy="65.7" r="28" fill="#eef7fb"/><path d="M2600,64 L2609,73 L2618,64" fill="none" stroke="#fff" stroke-width="3" stroke-linecap="round" stroke-linejoin="round"/><defs>
<linearGradient id="lg1" x1="0" y1="1" x2="0.3" y2="0"><stop offset="0" stop-color="#4fae5a"/><stop offset="1" stop-color="#6ab97a"/></linearGradient>
<linearGradient id="lg2" x1="0" y1="1" x2="1" y2="0"><stop offset="0" stop-color="#5aa6c9"/><stop offset="1" stop-color="#2f6fa0"/></linearGradient>
<linearGradient id="lg3" x1="0" y1="0" x2="1" y2="1"><stop offset="0" stop-color="#b5d66a"/><stop offset="1" stop-color="#e4ea5f"/></linearGradient>
</defs><path d="M69.6,35.6 H79.8 L109.7,93.5 H99.7 L74.2,46.2 L49.9,90.4 V72.3 Z" fill="url(#lg1)"/><path d="M75.5,48.5 L78.6,55 L59.8,94.3 H49.9 Z" fill="url(#lg2)"/><path d="M81.7,35.6 H90.4 L111.5,75.4 V93.5 Z" fill="url(#lg3)"/><g stroke="#2e2e2e" stroke-width="3.6" stroke-linecap="round"><path d="M399.5,54.8 H417.7"/><path d="M388.2,65.9 H417.7"/><path d="M406.8,76.9 H417.7"/></g><path d="M392.5,346.5 L403.0,357.5 L413.5,346.5" fill="none" stroke="#555" stroke-width="2.8" stroke-linecap="round" stroke-linejoin="round"/><path d="M392.5,435.5 L403.0,446.5 L413.5,435.5" fill="none" stroke="#555" stroke-width="2.8" stroke-linecap="round" stroke-linejoin="round"/><path d="M392.5,829.5 L403.0,840.5 L413.5,829.5" fill="none" stroke="#555" stroke-width="2.8" stroke-linecap="round" stroke-linejoin="round"/><path d="M392.5,918.3 L403.0,929.3 L413.5,918.3" fill="none" stroke="#555" stroke-width="2.8" stroke-linecap="round" stroke-linejoin="round"/><path d="M392.5,1007.5 L403.0,1018.5 L413.5,1007.5" fill="none" stroke="#555" stroke-width="2.8" stroke-linecap="round" stroke-linejoin="round"/><path d="M392.5,1099.5 L403.0,1110.5 L413.5,1099.5" fill="none" stroke="#555" stroke-width="2.8" stroke-linecap="round" stroke-linejoin="round"/><path d="M392.5,1189.2 L403.0,1200.2 L413.5,1189.2" fill="none" stroke="#555" stroke-width="2.8" stroke-linecap="round" stroke-linejoin="round"/><path d="M392.5,1281.5 L403.0,1292.5 L413.5,1281.5" fill="none" stroke="#555" stroke-width="2.8" stroke-linecap="round" stroke-linejoin="round"/><path d="M392.5,1372.9 L403.0,1383.9 L413.5,1372.9" fill="none" stroke="#555" stroke-width="2.8" stroke-linecap="round" stroke-linejoin="round"/><path d="M392.5,1463.5 L403.0,1474.5 L413.5,1463.5" fill="none" stroke="#555" stroke-width="2.8" stroke-linecap="round" stroke-linejoin="round"/><path d="M392.5,1553.0 L403.0,1564.0 L413.5,1553.0" fill="none" stroke="#555" stroke-width="2.8" stroke-linecap="round" stroke-linejoin="round"/><path d="M28.4,518.4 H55.6 V526.5 H46.5 V536 H37.5 V545.3 H28.4 Z M37.5,518.4 V536 M46.5,518.4 V526.5" fill="none" stroke="#1f5475" stroke-width="3.5" stroke-linejoin="round"/><path d="M395.5,537.5 L403.0,526.5 L416.5,537.5" fill="none" stroke="#111" stroke-width="3" stroke-linecap="round" stroke-linejoin="round"/><path d="M29.3,184.5 L47.6,174.6 L65.9,184.5 V206 Q65.9,210.8 61.1,210.8 H34.1 Q29.3,210.8 29.3,206 Z M41.6,210.8 V192.6 H54 V210.8" fill="none" stroke="#1e2a45" stroke-width="3.2" stroke-linecap="round" stroke-linejoin="round" /><path d="M28.9,278.3 H37.8 V293.8 H28.9 Z M45.1,274.7 H53.3 V293.8 H45.1 Z M60.6,265.2 H69.3 V293.8 H60.6 Z" fill="none" stroke="#1e2a45" stroke-width="2.8" stroke-linecap="round" stroke-linejoin="round" /><path d="M32.7,270 L49.1,266.3 L64.4,255" fill="none" stroke="#1e2a45" stroke-width="2.4" stroke-linecap="round" stroke-linejoin="round" /><circle cx="32.7" cy="270" r="2.5" fill="#fdfdfe" stroke="#1e2a45" stroke-width="2.5"/><circle cx="49.1" cy="266.3" r="2.5" fill="#fdfdfe" stroke="#1e2a45" stroke-width="2.5"/><circle cx="64.4" cy="255" r="2.5" fill="#fdfdfe" stroke="#1e2a45" stroke-width="2.5"/><path d="M30.6,345.4 Q30.6,339.2 36.8,339.2 H57.1 Q63.3,339.2 63.3,345.4 V365.7 Q63.3,371.9 57.1,371.9 H36.8 Q30.6,371.9 30.6,365.7 Z M30.6,350.3 H63.3 M39.7,334.8 V342.8 M54.2,334.8 V342.8" fill="none" stroke="#1e2a45" stroke-width="2.9" stroke-linecap="round" stroke-linejoin="round" /><path d="M35.5,435.4 a7,7 0 1,0 14,0 a7,7 0 1,0 -14,0" fill="none" stroke="#1e2a45" stroke-width="3.1" stroke-linecap="round" stroke-linejoin="round" /><path d="M28.9,460 V455.6 a6.6,6.6 0 0 1 6.6,-6.6 H49.5 a6.6,6.6 0 0 1 6.6,6.6 V460" fill="none" stroke="#1e2a45" stroke-width="3.4" stroke-linecap="round" stroke-linejoin="round" /><path d="M54.1,428.9 a6.8,6.8 0 0 1 0,13.4" fill="none" stroke="#1e2a45" stroke-width="3.1" stroke-linecap="round" stroke-linejoin="round" /><path d="M61,449.1 a5.2,5.8 0 0 1 5,5.6 V460" fill="none" stroke="#1e2a45" stroke-width="3.4" stroke-linecap="round" stroke-linejoin="round" /><path d="M32.4,829.8 V826.4 H34 Q34.8,820 39.2,818.3 L41.1,822.2 V816.9 H45.1 V822.2 L47.3,818.3 Q51.4,820 52.2,826.4 H52.9 V829.8 Z" fill="#1e2a45"/><path d="M35.1,832 a8,7 0 0 0 16,0" fill="none" stroke="#1e2a45" stroke-width="3.1" stroke-linecap="round" stroke-linejoin="round" /><path d="M55.5,823.1 a7,7 0 0 1 0,13.6" fill="none" stroke="#1e2a45" stroke-width="3.1" stroke-linecap="round" stroke-linejoin="round" /><path d="M28.9,854.4 V850 a6.5,6.5 0 0 1 6.5,-6.5 H49.5 a6.5,6.5 0 0 1 6.5,6.5 V854.4 M42.7,843.5 V854.4" fill="none" stroke="#1e2a45" stroke-width="3.2" stroke-linecap="round" stroke-linejoin="round" /><path d="M60.8,843.8 a5.8,6 0 0 1 5.6,6 V854.4" fill="none" stroke="#1e2a45" stroke-width="3.2" stroke-linecap="round" stroke-linejoin="round" /><path d="M35.1,934.6 A10.3,10.3 0 0 1 37.5,914.6 A10.3,10.3 0 0 1 57.7,914.6 A10.3,10.3 0 0 1 59.8,934.6" fill="none" stroke="#1e2a45" stroke-width="1.9" stroke-linecap="round" stroke-linejoin="round" /><path d="M38.6,922.2 Q38.6,920.2 40.6,920.2 H55.1 Q57.1,920.2 57.1,922.2 V943.3 Q57.1,945.3 55.1,945.3 H40.6 Q38.6,945.3 38.6,943.3 Z M38.6,928.7 H57.1 M38.6,936.8 H57.1" fill="none" stroke="#1e2a45" stroke-width="2.1" stroke-linecap="round" stroke-linejoin="round" /><path d="M42.6,924.9 V925 M46.4,924.9 H52.9 M42.6,932.9 V933 M46.4,932.9 H52.9 M42.6,941.1 V941.2 M46.4,941.1 H52.9" fill="none" stroke="#1e2a45" stroke-width="1.8" stroke-linecap="round" stroke-linejoin="round" /><path d="M28.3,1003 H66.7 V1008.7 H28.3 Z" fill="none" stroke="#1e2a45" stroke-width="2.2" stroke-linecap="round" stroke-linejoin="round" /><path d="M46.5,1008.5 L50.8,1003.2 L55.1,1008.5 L59.4,1003.2 L63.7,1008.5 M29.5,1003.5 L32.5,1008.2" fill="none" stroke="#1e2a45" stroke-width="1.9" stroke-linecap="round" stroke-linejoin="round" /><path d="M34.2,999.9 H43 Q44.8,999.9 44.8,1001.7 V1010.7 H34.2 Z" fill="#fdfdfe" stroke="#1e2a45" stroke-width="2.2" stroke-linejoin="round"/><rect x="38.3" y="1001.5" width="5.2" height="6" fill="#1e2a45"/><path d="M38.4,993.5 L41,999 H35.8 Z" fill="#1e2a45" stroke="#1e2a45" stroke-width="1.2" stroke-linejoin="round"/><path d="M36,1011.7 V1032.4 M41,1011.7 V1032.4 M36,1012.5 L41,1017.5 L36,1023 L41,1028 L36,1032" fill="none" stroke="#1e2a45" stroke-width="2.1" stroke-linecap="round" stroke-linejoin="round" /><path d="M30.2,1033.2 H46.6 V1037 H30.2 Z" fill="none" stroke="#1e2a45" stroke-width="2.2" stroke-linecap="round" stroke-linejoin="round" /><path d="M63.7,1009.7 V1016.4 M61.8,1016.4 H65.5 M63.7,1016.4 V1018 a2.8,2.8 0 1 1 -2.8,2.8" fill="none" stroke="#1e2a45" stroke-width="1.9" stroke-linecap="round" stroke-linejoin="round" /><g transform="translate(47.5,1107.9) scale(0.9)" fill="none" stroke="#1e2a45" stroke-width="2.89" stroke-linejoin="round" stroke-linecap="round"><path transform="rotate(45)" d="M-27,-2.2 L-24.5,-4 H-19.5 L-17,-1.6 H3 L3,-5 H6 V-4.6 H22 A4.6,4.6 0 0 1 22,4.6 H6 V5 H3 L3,1.6 H-17 L-19.5,4 H-24.5 L-27,2.2 Z M-14,0 H1 M9,0 H22" fill="#fdfdfe"/><path transform="rotate(-45)" d="M-11.93,-2.5 H11.93 A7.5,7.5 0 0 1 25.96,-2.8 H20.8 A2.8,2.8 0 0 0 20.8,2.8 H25.96 A7.5,7.5 0 0 1 11.93,2.5 H-11.93 A7.5,7.5 0 0 1 -25.96,2.8 H-20.8 A2.8,2.8 0 0 0 -20.8,-2.8 H-25.96 A7.5,7.5 0 0 1 -11.93,-2.5 Z" fill="#fdfdfe"/></g><path d="M28.2,1184 Q28.2,1180 32.2,1180 H62.8 Q66.8,1180 66.8,1184 V1214.9 Q66.8,1218.9 62.8,1218.9 H32.2 Q28.2,1218.9 28.2,1214.9 Z M28.2,1187.6 H66.8 M38.7,1176.2 V1184.4 M56.9,1176.2 V1184.4" fill="none" stroke="#1e2a45" stroke-width="2.2" stroke-linecap="round" stroke-linejoin="round" /><g transform="translate(47.75,1203.5) scale(0.59)" fill="none" stroke="#1e2a45" stroke-width="2.88" stroke-linejoin="round" stroke-linecap="round"><path transform="rotate(45)" d="M-27,-2.2 L-24.5,-4 H-19.5 L-17,-1.6 H3 L3,-5 H6 V-4.6 H22 A4.6,4.6 0 0 1 22,4.6 H6 V5 H3 L3,1.6 H-17 L-19.5,4 H-24.5 L-27,2.2 Z M-14,0 H1 M9,0 H22" fill="#fdfdfe"/><path transform="rotate(-45)" d="M-11.93,-2.5 H11.93 A7.5,7.5 0 0 1 25.96,-2.8 H20.8 A2.8,2.8 0 0 0 20.8,2.8 H25.96 A7.5,7.5 0 0 1 11.93,2.5 H-11.93 A7.5,7.5 0 0 1 -25.96,2.8 H-20.8 A2.8,2.8 0 0 0 -20.8,-2.8 H-25.96 A7.5,7.5 0 0 1 -11.93,-2.5 Z" fill="#fdfdfe"/></g><path d="M44.7,1307.3 H32.4 Q28.9,1307.3 28.9,1303.8 V1271.3 Q28.9,1267.8 32.4,1267.8 H46.9 L60,1281.5 V1284.7" fill="none" stroke="#1e2a45" stroke-width="3.1" stroke-linecap="round" stroke-linejoin="round" /><path d="M46.2,1268.4 V1277.8 Q46.2,1281.8 50.2,1281.8 H59.3" fill="none" stroke="#1e2a45" stroke-width="3.1" stroke-linecap="round" stroke-linejoin="round" /><path d="M34.6,1287.7 H48 M34.6,1294.4 H39.3 M34.6,1300.8 H39.3" fill="none" stroke="#1e2a45" stroke-width="3.1" stroke-linecap="round" stroke-linejoin="round" /><circle cx="56" cy="1299.1" r="12.6" fill="#fdfdfe"/><circle cx="56" cy="1299.1" r="11.5" fill="#1e2a45"/><path d="M61.2,1294 A6,6 0 1 0 61.2,1304.2 M47.2,1297.6 H57 M47.2,1300.8 H57" fill="none" stroke="#fdfdfe" stroke-width="2.1" stroke-linecap="round" stroke-linejoin="round" /><path d="M29.6,1387 A21,21 0 0 1 65.9,1367.3 M69.5,1374.6 A21,21 0 0 1 33.5,1394.9" fill="none" stroke="#1e2a45" stroke-width="2.7" stroke-linecap="round" stroke-linejoin="round" /><path d="M60.8,1369.3 H66.9 V1362.9 M38.2,1392 H32 V1398.6" fill="none" stroke="#1e2a45" stroke-width="2.9" stroke-linecap="round" stroke-linejoin="round" /><path d="M50.9,1366 V1377.5 H59.7 L48,1395.3 V1383.7 H39.3 Z" fill="none" stroke="#1e2a45" stroke-width="2.7" stroke-linecap="round" stroke-linejoin="round" /><path d="M29.3,1453 H43.3 V1466.7 H29.3 Z M51.9,1453 H66 V1466.7 H51.9 Z M29.3,1475.3 H43.3 V1488.9 H29.3 Z M51.9,1475.3 H66 V1488.9 H51.9 Z" fill="none" stroke="#1e2a45" stroke-width="3.6" stroke-linecap="round" stroke-linejoin="round" /><path d="M49.6,1542.2 L59.0,1546.7 V1557.2 L49.6,1561.7 L40.2,1557.2 V1546.7 Z M40.2,1546.7 L49.6,1551.2 L59.0,1546.7 M49.6,1551.2 V1561.7" fill="none" stroke="#1e2a45" stroke-width="3.2" stroke-linecap="round" stroke-linejoin="round" /><path d="M38.8,1558.2 L48.199999999999996,1562.7 V1573.2 L38.8,1577.7 L29.4,1573.2 V1562.7 Z M29.4,1562.7 L38.8,1567.2 L48.199999999999996,1562.7 M38.8,1567.2 V1577.7" fill="none" stroke="#1e2a45" stroke-width="3.2" stroke-linecap="round" stroke-linejoin="round" /><path d="M60.4,1558.2 L69.8,1562.7 V1573.2 L60.4,1577.7 L51.0,1573.2 V1562.7 Z M51.0,1562.7 L60.4,1567.2 L69.8,1562.7 M60.4,1567.2 V1577.7" fill="none" stroke="#1e2a45" stroke-width="3.2" stroke-linecap="round" stroke-linejoin="round" /><circle cx="326.2" cy="1640" r="32.2" fill="#f2bb77"/><path d="M326,1624.5 c-10.5,0 -17.5,6 -17.5,13.5 c0,5 3.2,9 8,11.5 l-1.5,8 l8.5,-6 c0.8,0.1 1.7,0.1 2.5,0.1 c10.5,0 17.5,-6 17.5,-13.5 c0,-7.5 -7,-13.6 -17.5,-13.6 z" fill="none" stroke="#fff" stroke-width="2.8" stroke-linejoin="round"/><circle cx="416.7" cy="1640" r="32.2" fill="#4b89ab"/><path d="M418,1621.5 L427.6,1648 Q418,1644 409.2,1645.1 L405.7,1634 Q413,1630 418,1621.5 Z M405.7,1634 L396.8,1636.8 Q393.6,1638.3 394.8,1641.6 L397.2,1647 Q398.8,1649.8 401.6,1649 L409.2,1645.1 M403,1649.6 L408,1658.6 Q410,1661.3 412.6,1659.8 Q414.6,1658.3 413.5,1655.8 L409.6,1647.6 M427,1627 L431.8,1621.2 M429.5,1632.5 L437,1629.7 M429.5,1638.3 L437.2,1640" fill="none" stroke="#fff" stroke-width="2.9" stroke-linejoin="round" stroke-linecap="round"/><circle cx="606.5" cy="235.5" r="14.5" fill="none" stroke="#666" stroke-width="3.6"/><path d="M617.5,246.5 L625,254" stroke="#666" stroke-width="3.6" stroke-linecap="round"/><path d="M1724.5,219.5 H1765 L1750,238.5 V257.5 L1739.5,251.5 V238.5 Z" fill="none" stroke="#5b9dbd" stroke-width="3.4" stroke-linejoin="round"/><g fill="#e9ecf0"><rect x="2031" y="220" width="10.5" height="6" rx="1"/><rect x="2031" y="229.5" width="10.5" height="6" rx="1"/><rect x="2031" y="239" width="10.5" height="6" rx="1"/><rect x="2031" y="248.5" width="10.5" height="6" rx="1"/><rect x="2045.5" y="220" width="22.5" height="34" rx="1"/></g><g stroke="#5b9dbd" stroke-width="3.4" stroke-linecap="round"><path d="M2113.5,225.8 H2147.5"/><path d="M2113.5,237 H2147.5"/><path d="M2113.5,247.9 H2147.5"/></g><path d="M854.1,363 L863.8,352 L873.5,363" fill="none" stroke="#7ea6c1" stroke-width="3" stroke-linecap="square"/><path d="M854.1,382.5 L863.8,393.5 L873.5,382.5" fill="none" stroke="#cdd3da" stroke-width="3" stroke-linecap="square"/><path d="M1168.5,363 L1178.0,352 L1187.5,363" fill="none" stroke="#cdd3da" stroke-width="3" stroke-linecap="square"/><path d="M1168.5,382.5 L1178.0,393.5 L1187.5,382.5" fill="none" stroke="#cdd3da" stroke-width="3" stroke-linecap="square"/><path d="M1452.0,363 L1461.45,352 L1470.9,363" fill="none" stroke="#cdd3da" stroke-width="3" stroke-linecap="square"/><path d="M1452.0,382.5 L1461.45,393.5 L1470.9,382.5" fill="none" stroke="#cdd3da" stroke-width="3" stroke-linecap="square"/><path d="M1786.5,363 L1795.5,352 L1804.5,363" fill="none" stroke="#cdd3da" stroke-width="3" stroke-linecap="square"/><path d="M1786.5,382.5 L1795.5,393.5 L1804.5,382.5" fill="none" stroke="#cdd3da" stroke-width="3" stroke-linecap="square"/><rect x="2590.5" y="357.3" width="34" height="30" rx="4" fill="none" stroke="#8a97a8" stroke-width="3"/><path d="M2602.2,357.3 V387.3 M2613,357.3 V387.3" stroke="#8a97a8" stroke-width="3"/><circle cx="1156" cy="1507.3" r="22" fill="#fff" stroke="#c9cfd6" stroke-width="1.6"/><path d="M1146.5,1502 L1156,1512.5 L1165.5,1502" fill="none" stroke="#2c5f88" stroke-width="3.4" stroke-linecap="round" stroke-linejoin="round"/><path d="M1230.7,1494.5 L1250.5,1490.6 V1521.7 L1230.7,1517.8 Z" fill="#5fae6f"/><path d="M1250,1495 H1261.9 V1517.5 H1250 Z" fill="#5fae6f"/><path d="M1252.5,1499 H1259.5 M1252.5,1503.5 H1259.5 M1252.5,1508 H1259.5 M1252.5,1512.5 H1259.5" stroke="#ffffff" stroke-width="1.6"/><path d="M1235.5,1500.5 L1243,1511.5 M1243,1500.5 L1235.5,1511.5" stroke="#ffffff" stroke-width="2.4"/><circle cx="2348.4" cy="1507.3" r="22" fill="none" stroke="#cdd1d7" stroke-width="2"/><circle cx="2404" cy="1507.3" r="22" fill="none" stroke="#cdd1d7" stroke-width="2"/><circle cx="2515" cy="1507.3" r="22" fill="none" stroke="#cdd1d7" stroke-width="2"/><circle cx="2570.7" cy="1507.3" r="22" fill="none" stroke="#cdd1d7" stroke-width="2"/><path d="M2340.3,1498 V1516.5 M2357,1498 L2348.5,1507.3 L2357,1516.5" fill="none" stroke="#c8cdd4" stroke-width="3"/><path d="M2407.5,1498 L2399,1507.3 L2407.5,1516.5" fill="none" stroke="#c8cdd4" stroke-width="3"/><path d="M2511,1498 L2519.5,1507.3 L2511,1516.5" fill="none" stroke="#c8cdd4" stroke-width="3"/><path d="M2578.5,1498 V1516.5 M2561.5,1498 L2570,1507.3 L2561.5,1516.5" fill="none" stroke="#c8cdd4" stroke-width="3"/><defs><filter id="cshadow" x="-50%" y="-50%" width="200%" height="200%"><feGaussianBlur stdDeviation="2"/></filter></defs><path d="M2519.6,256.8 L2516,231 Q2516.5,226.5 2520,226.8 Q2523.5,227 2524.3,230.5 L2528.1,249.4 L2530,242.5 Q2531.5,240.5 2534,240.8 Q2537,241.5 2538.1,249.4 L2539.8,243 Q2541.5,241 2544,241.5 Q2548,242.5 2549.3,249.9 L2551,246.5 Q2553,244.5 2555.5,245.5 Q2557.5,247 2557.3,252 L2556.5,262 Q2554.5,269 2549.8,274.8 L2549.3,282.2 H2542.9 L2540.3,277.6 L2535.5,282.2 H2523.9 V278.5 L2506.5,257 Q2504,252.5 2507,250 Q2510,248 2513.5,250.5 Z" fill="#000" opacity="0.35" transform="translate(0,3)" filter="url(#cshadow)"/><path d="M2519.6,256.8 L2516,231 Q2516.5,226.5 2520,226.8 Q2523.5,227 2524.3,230.5 L2528.1,249.4 L2530,242.5 Q2531.5,240.5 2534,240.8 Q2537,241.5 2538.1,249.4 L2539.8,243 Q2541.5,241 2544,241.5 Q2548,242.5 2549.3,249.9 L2551,246.5 Q2553,244.5 2555.5,245.5 Q2557.5,247 2557.3,252 L2556.5,262 Q2554.5,269 2549.8,274.8 L2549.3,282.2 H2542.9 L2540.3,277.6 L2535.5,282.2 H2523.9 V278.5 L2506.5,257 Q2504,252.5 2507,250 Q2510,248 2513.5,250.5 Z" fill="#fff" stroke="#000" stroke-width="2.9" stroke-linejoin="round"/><path d="M2531,258.4 V272.1 M2538.4,258.4 V272.1 M2546.1,258.4 V272.1" stroke="#000" stroke-width="2.6"/></svg>
</body></html>
